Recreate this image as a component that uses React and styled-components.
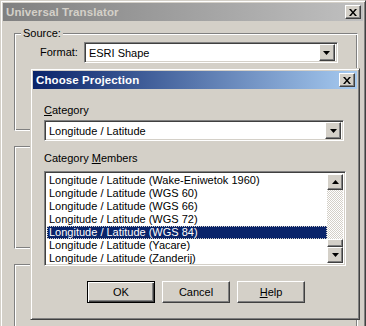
import React from "react";
import styled, { createGlobalStyle, css } from "styled-components";

const GlobalStyle = createGlobalStyle`
	html, body {
		margin: 0;
		padding: 0;
		background: #d4d0c8;
	}
	body {
		font-family: "Liberation Sans", Arial, sans-serif;
		font-size: 11px;
		color: #000;
	}
`;

const raised = css`
	border: 1px solid;
	border-color: #fff #404040 #404040 #fff;
	box-shadow: inset -1px -1px #808080, inset 1px 1px #d4d0c8;
`;

const sunken = css`
	border: 1px solid;
	border-color: #808080 #fff #fff #808080;
	box-shadow: inset 1px 1px #404040, inset -1px -1px #d4d0c8;
`;

const etched = css`
	border: 1px solid;
	border-color: #808080 #fff #fff #808080;
	box-shadow: inset 1px 1px #fff, inset -1px -1px #808080;
`;

const S = {};

S.Screen = styled.div`
	position: relative;
	width: 366px;
	height: 326px;
	overflow: hidden;
	background: #d4d0c8;
`;

S.Window = styled.div`
	width: 366px;
	height: 360px;
	box-sizing: border-box;
	border: 1px solid;
	border-color: #d4d0c8 #404040 #404040 #d4d0c8;
	box-shadow: inset 1px 1px #fff, inset -1px -1px #808080;
	padding: 2px;
	background: #d4d0c8;
	display: flex;
	flex-direction: column;
`;

S.Dialog = styled(S.Window)`
	position: absolute;
	left: 30px;
	top: 68px;
	width: 330px;
	height: 252px;
`;

S.TitleBar = styled.div`
	height: 18px;
	flex: none;
	display: flex;
	align-items: center;
	justify-content: space-between;
	padding: 0 2px 0 3px;
	background: ${p => (p.active ? "linear-gradient(to right, #0a246a, #a6caf0)" : "linear-gradient(to right, #808080, #c0c0c0)")};
	color: ${p => (p.active ? "#fff" : "#d4d0c8")};
	font-weight: bold;
	font-size: 11.5px;
	letter-spacing: 0.1px;
`;

S.CloseButton = styled.div`
	${raised};
	width: 16px;
	height: 14px;
	box-sizing: border-box;
	background: #d4d0c8;
	display: flex;
	align-items: center;
	justify-content: center;
`;

S.WindowBody = styled.div`
	padding: 12px 5px 0 11px;
	display: flex;
	flex-direction: column;
	gap: 15px;
`;

S.GroupBox = styled.div`
	${etched};
	position: relative;
	height: ${p => p.height}px;
	box-sizing: border-box;
	padding: 8px 0 0 25px;
	flex: none;
`;

S.GroupLabel = styled.span`
	position: absolute;
	left: 6px;
	top: -7px;
	padding: 0 2px;
	background: #d4d0c8;
	line-height: 13px;
`;

S.FieldRow = styled.div`
	display: flex;
	align-items: center;
	gap: 6px;
`;

S.Combo = styled.div`
	${sunken};
	width: ${p => p.width}px;
	height: 21px;
	box-sizing: border-box;
	background: #fff;
	display: flex;
	align-items: center;
	justify-content: space-between;
	padding: 2px 2px 2px 4px;
`;

S.ArrowButton = styled.div`
	${raised};
	width: 16px;
	height: ${p => p.height || 17}px;
	box-sizing: border-box;
	background: #d4d0c8;
	display: flex;
	align-items: center;
	justify-content: center;
	flex: none;
`;

S.DialogBody = styled.div`
	padding: 15px 11px 0 11px;
	display: flex;
	flex-direction: column;
`;

S.Label = styled.div`
	line-height: 13px;
	margin-top: ${p => p.above || 0}px;
	margin-bottom: ${p => p.below || 0}px;
	u {
		text-decoration: underline;
		text-underline-offset: 1px;
	}
`;

S.ListBox = styled.div`
	${sunken};
	height: 95px;
	box-sizing: border-box;
	background: #fff;
	padding: 2px;
	display: flex;
	margin-top: 6px;
`;

S.Items = styled.div`
	flex: 1;
	display: flex;
	flex-direction: column;
`;

S.Item = styled.div`
	height: 13px;
	line-height: 13px;
	padding-left: 2px;
	white-space: nowrap;
	box-sizing: border-box;
	${p =>
		p.selected &&
		css`
			background: #0a246a;
			color: #fff;
			outline: 1px dotted #d4d0c8;
			outline-offset: -1px;
		`}
`;

S.ScrollBar = styled.div`
	width: 16px;
	display: flex;
	flex-direction: column;
`;

S.Track = styled.div`
	flex: 1;
	display: flex;
	flex-direction: column;
	justify-content: flex-end;
	background: repeating-conic-gradient(#d4d0c8 0 25%, #fff 0 50%) 0 0 / 2px 2px;
`;

S.Thumb = styled.div`
	${raised};
	height: 8px;
	box-sizing: border-box;
	background: #d4d0c8;
`;

S.ButtonRow = styled.div`
	display: flex;
	justify-content: center;
	gap: 7px;
	margin-top: 15px;
	padding-left: 2px;
`;

S.Button = styled.div`
	width: 68px;
	height: 22px;
	box-sizing: border-box;
	display: flex;
	align-items: center;
	justify-content: center;
	background: #d4d0c8;
	${p =>
		p.isDefault
			? css`
					border: 1px solid #000;
					box-shadow: inset 1px 1px #fff, inset -1px -1px #404040, inset -2px -2px #808080;
				`
			: raised}
	u {
		text-underline-offset: 1px;
	}
`;

const CloseIcon = () => (
	<svg width="8" height="7" viewBox="0 0 8 7">
		<path d="M0 0h2l2 2.5L6 0h2L5 3.5 8 7H6L4 4.5 2 7H0l3-3.5z" fill="#000" />
	</svg>
);

const Triangle = ({ up }) => (
	<svg width="7" height="4" viewBox="0 0 7 4">
		<polygon points={up ? "3.5,0 7,4 0,4" : "0,0 7,0 3.5,4"} fill="#000" />
	</svg>
);

const members = [
	"Longitude / Latitude (Wake-Eniwetok 1960)",
	"Longitude / Latitude (WGS 60)",
	"Longitude / Latitude (WGS 66)",
	"Longitude / Latitude (WGS 72)",
	"Longitude / Latitude (WGS 84)",
	"Longitude / Latitude (Yacare)",
	"Longitude / Latitude (Zanderij)"
];

const ChooseProjection = () => (
	<S.Dialog>
		<S.TitleBar active>
			<span>Choose Projection</span>
			<S.CloseButton>
				<CloseIcon />
			</S.CloseButton>
		</S.TitleBar>
		<S.DialogBody>
			<S.Label below={3}>
				<u>C</u>ategory
			</S.Label>
			<S.Combo width={300}>
				<span>Longitude / Latitude</span>
				<S.ArrowButton>
					<Triangle />
				</S.ArrowButton>
			</S.Combo>
			<S.Label above={11}>
				Category <u>M</u>embers
			</S.Label>
			<S.ListBox>
				<S.Items>
					{members.map((m, i) => (
						<S.Item key={`member-${i}`} selected={i === 4}>
							{m}
						</S.Item>
					))}
				</S.Items>
				<S.ScrollBar>
					<S.ArrowButton height={16}>
						<Triangle up />
					</S.ArrowButton>
					<S.Track>
						<S.Thumb />
					</S.Track>
					<S.ArrowButton height={16}>
						<Triangle />
					</S.ArrowButton>
				</S.ScrollBar>
			</S.ListBox>
			<S.ButtonRow>
				<S.Button isDefault>OK</S.Button>
				<S.Button>Cancel</S.Button>
				<S.Button>
					<span>
						<u>H</u>elp
					</span>
				</S.Button>
			</S.ButtonRow>
		</S.DialogBody>
	</S.Dialog>
);

export default function App() {
	return (
		<S.Screen>
			<GlobalStyle />
			<S.Window>
				<S.TitleBar>
					<span>Universal Translator</span>
					<S.CloseButton>
						<CloseIcon />
					</S.CloseButton>
				</S.TitleBar>
				<S.WindowBody>
					<S.GroupBox height={98}>
						<S.GroupLabel>Source:</S.GroupLabel>
						<S.FieldRow>
							<S.Label>Format:</S.Label>
							<S.Combo width={254}>
								<span>ESRI Shape</span>
								<S.ArrowButton>
									<Triangle />
								</S.ArrowButton>
							</S.Combo>
						</S.FieldRow>
					</S.GroupBox>
					<S.GroupBox height={103} />
					<S.GroupBox height={103} />
				</S.WindowBody>
			</S.Window>
			<ChooseProjection />
		</S.Screen>
	);
}
